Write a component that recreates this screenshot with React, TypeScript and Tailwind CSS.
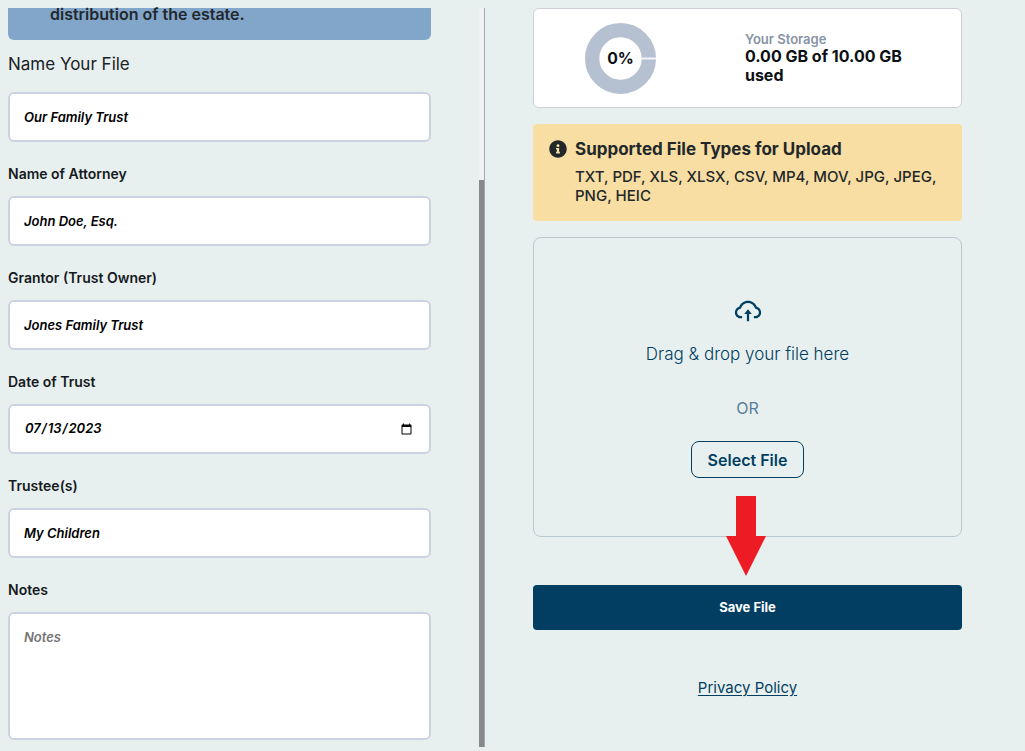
import { useState } from "react";
import { AiOutlineCloudUpload } from "react-icons/ai";
import { FaInfoCircle } from "react-icons/fa";

const fieldBox =
  "block w-full rounded-md border-2 border-[#cbd3e3] bg-white px-3.5 text-[13px] font-semibold italic text-black placeholder:text-[#757575]";

type FieldProps = {
  id: string;
  label: string;
  value: string;
  type?: string;
  large?: boolean;
};

function Field({ id, label, value, type = "text", large = false }: FieldProps) {
  const [current, setCurrent] = useState(value);
  return (
    <div className={large ? "flex flex-col gap-4" : "flex flex-col gap-3"}>
      <label
        htmlFor={id}
        className={
          large
            ? "text-[17px] leading-6 text-[#1c2126]"
            : "text-sm font-semibold leading-5 text-[#16191d]"
        }
      >
        {label}
      </label>
      <input
        id={id}
        type={type}
        value={current}
        onChange={(e) => setCurrent(e.target.value)}
        className={`${fieldBox} h-[50px]`}
      />
    </div>
  );
}

function FileForm() {
  return (
    <form className="min-w-0 flex-1 pb-[7px] pr-12">
      <div className="rounded-b-md bg-[#82a5ca] pb-5 pl-[42px] pr-4">
        <p className="text-base font-semibold leading-3 text-[#22282c]">
          distribution of the estate.
        </p>
      </div>
      <div className="mt-3 flex flex-col gap-[22px]">
        <Field id="file-name" label="Name Your File" value="Our Family Trust" large />
        <Field id="attorney" label="Name of Attorney" value="John Doe, Esq." />
        <Field id="grantor" label="Grantor (Trust Owner)" value="Jones Family Trust" />
        <Field id="trust-date" label="Date of Trust" value="2023-07-13" type="date" />
        <Field id="trustees" label="Trustee(s)" value="My Children" />
        <div className="flex flex-col gap-3">
          <label htmlFor="notes" className="text-sm font-semibold leading-5 text-[#16191d]">
            Notes
          </label>
          <textarea
            id="notes"
            placeholder="Notes"
            className={`${fieldBox} h-32 resize-none py-[13px] leading-5`}
          />
        </div>
      </div>
    </form>
  );
}

function ScrollTrack() {
  return (
    <div aria-hidden="true" className="flex w-[5px] shrink-0 flex-col bg-[#f1f1f1]">
      <div className="flex-[172]" />
      <div className="flex-[567] bg-[#888888]" />
    </div>
  );
}

function StorageCard() {
  return (
    <section className="grid min-h-[100px] grid-cols-[40.5%_1fr] items-center gap-[38px] rounded-md border border-[#cdd1d6] bg-white">
      <svg viewBox="0 0 72 72" className="size-[71px] justify-self-center" role="img" aria-label="0%">
        <circle cx="36" cy="36" r="28.75" fill="none" stroke="#b5c0d1" strokeWidth="14.5" />
        <path d="M57 36h15" stroke="#f3f5f8" strokeWidth="2" />
        <text
          x="36"
          y="42"
          textAnchor="middle"
          fontSize="16"
          fontWeight="700"
          fill="#0d1014"
        >
          0%
        </text>
      </svg>
      <div className="pr-12">
        <h2 className="text-[13px] font-semibold leading-4 text-[#8793a6]">Your Storage</h2>
        <p className="text-base font-bold leading-[19px] text-[#0d1014]">
          0.00 GB of 10.00 GB used
        </p>
      </div>
    </section>
  );
}

function FileTypesNotice() {
  return (
    <section className="flex gap-2 rounded bg-[#f9dea4] p-4 text-[#22282a]">
      <FaInfoCircle className="size-[18px] shrink-0" />
      <div className="flex min-w-0 flex-col gap-2">
        <h2 className="text-[17px] font-bold leading-[19px]">Supported File Types for Upload</h2>
        <p className="text-[15px] font-medium leading-[19px]">
          TXT, PDF, XLS, XLSX, CSV, MP4, MOV, JPG, JPEG, PNG, HEIC
        </p>
      </div>
    </section>
  );
}

function DropZone() {
  return (
    <section className="relative flex h-[300px] flex-col items-center rounded-lg border border-[#b9c9cf] pt-[58px] text-[#023e62]">
      <AiOutlineCloudUpload className="size-[30px]" />
      <p className="mt-4 text-[17px] font-light leading-6">Drag &amp; drop your file here</p>
      <p className="mt-[30px] text-base leading-6 text-[#5a7f97]">OR</p>
      <button
        type="button"
        className="mt-[21px] h-[37px] rounded-lg border border-[#023e62] px-4 text-base font-semibold"
      >
        Select File
      </button>
      <svg
        viewBox="0 0 40 80"
        aria-hidden="true"
        className="absolute left-[45%] top-[258px] h-20 w-10"
      >
        <path d="M10 0h20v40h10L20 80 0 40h10z" fill="#ed1c24" />
      </svg>
    </section>
  );
}

export default function App() {
  return (
    <main className="grid min-h-screen grid-cols-[53fr_60fr] items-start bg-[#e7f0ef] pl-2 pt-2 font-['Inter','Liberation_Sans',sans-serif]">
      <div className="flex border-r border-[#9fa9bb]">
        <FileForm />
        <ScrollTrack />
      </div>
      <div className="flex flex-col gap-4 pl-12 pr-[63px]">
        <StorageCard />
        <FileTypesNotice />
        <DropZone />
        <button
          type="button"
          className="mt-8 h-[45px] rounded bg-[#023e62] text-[13px] font-bold text-white"
        >
          Save File
        </button>
        <a
          href="#privacy"
          className="mt-8 self-center text-[15px] leading-5 text-[#023e62] underline underline-offset-2"
        >
          Privacy Policy
        </a>
      </div>
    </main>
  );
}
